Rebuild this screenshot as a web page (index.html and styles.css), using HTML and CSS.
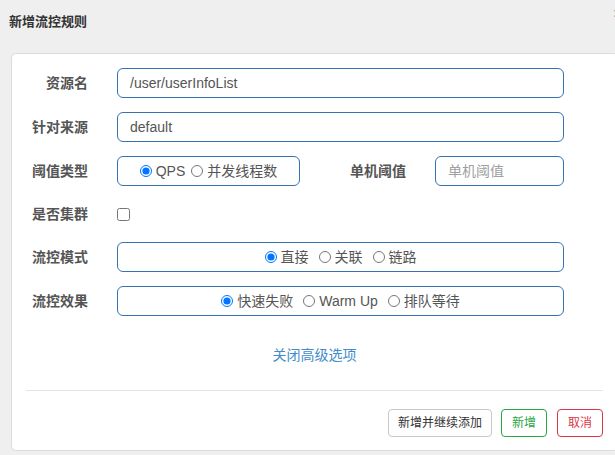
FILE: index.html
```html
<!DOCTYPE html>
<html lang="zh">
<head>
<meta charset="utf-8">
<title>新增流控规则</title>
<link rel="stylesheet" href="styles.css">
</head>
<body>
<div class="dialog">
  <div class="dialog-header">
    <span class="dialog-title">新增流控规则</span>
    <span class="dialog-close">×</span>
  </div>
  <div class="card">
    <div class="form">
      <div class="row">
        <label class="label">资源名</label>
        <div class="field input">/user/userInfoList</div>
      </div>
      <div class="row">
        <label class="label">针对来源</label>
        <div class="field input">default</div>
      </div>
      <div class="row">
        <label class="label">阈值类型</label>
        <div class="box box-small">
          <label class="opt"><input type="radio" name="grade" checked><span>QPS</span></label>
          <label class="opt"><input type="radio" name="grade"><span>并发线程数</span></label>
        </div>
        <label class="label label-second">单机阈值</label>
        <div class="input input-small placeholder">单机阈值</div>
      </div>
      <div class="row row-check">
        <label class="label">是否集群</label>
        <input type="checkbox" class="check">
      </div>
      <div class="row">
        <label class="label">流控模式</label>
        <div class="box field">
          <label class="opt"><input type="radio" name="mode" checked><span>直接</span></label>
          <label class="opt"><input type="radio" name="mode"><span>关联</span></label>
          <label class="opt"><input type="radio" name="mode"><span>链路</span></label>
        </div>
      </div>
      <div class="row">
        <label class="label">流控效果</label>
        <div class="box field">
          <label class="opt"><input type="radio" name="effect" checked><span>快速失败</span></label>
          <label class="opt"><input type="radio" name="effect"><span>Warm Up</span></label>
          <label class="opt"><input type="radio" name="effect"><span>排队等待</span></label>
        </div>
      </div>
    </div>
    <div class="advanced"><a class="link">关闭高级选项</a></div>
    <div class="divider"></div>
    <div class="actions">
      <button class="btn btn-default">新增并继续添加</button>
      <button class="btn btn-success">新增</button>
      <button class="btn btn-danger">取消</button>
    </div>
  </div>
</div>
</body>
</html>
```
FILE: styles.css
```css
html, body {
  margin: 0;
  padding: 0;
  overflow: hidden;
  background: #efefef;
  font-family: "Liberation Sans", "Noto Sans CJK SC", sans-serif;
  color: #555;
}

.dialog {
  padding-left: 11px;
  width: 611px;
}

.dialog-header {
  display: flex;
  align-items: flex-start;
  padding-top: 13px;
  height: 18px;
}

.dialog-title {
  font-size: 13px;
  font-weight: bold;
  line-height: 18px;
  color: #333;
  margin-left: -2px;
}

.dialog-close {
  margin-left: auto;
  font-size: 16px;
  line-height: 1;
  color: #aaa;
  margin-top: -7px;
}

.card {
  box-sizing: border-box;
  width: 607px;
  margin-top: 22px;
  background: #fff;
  border: 1px solid #dcdcdc;
  border-radius: 5px;
  padding: 14px 14px 13px 14px;
}

.form {
  display: flex;
  flex-direction: column;
  gap: 14px;
}

.row {
  display: flex;
  align-items: center;
  height: 30px;
}

.row-check {
  height: 28px;
}

.label {
  width: 62px;
  flex: none;
  text-align: right;
  font-size: 14px;
  font-weight: bold;
  color: #555;
  margin-right: 29px;
  line-height: 20px;
}

.label-second {
  margin-left: 44px;
}

.field {
  width: 447px;
}

.input {
  box-sizing: border-box;
  height: 30px;
  border: 1px solid #3573b3;
  border-radius: 6px;
  padding: 0 12px;
  font-size: 14px;
  line-height: 28px;
  color: #555;
}

.input-small {
  width: 129px;
}

.placeholder {
  color: #a0a0a0;
}

.box {
  box-sizing: border-box;
  height: 30px;
  border: 1px solid #3573b3;
  border-radius: 6px;
  display: flex;
  align-items: center;
  justify-content: center;
  gap: 10px;
  font-size: 14px;
}

.box-small {
  width: 183px;
  gap: 6px;
}

.opt {
  display: flex;
  align-items: center;
  gap: 4px;
  color: #555;
  line-height: 20px;
}

.opt input {
  margin: 0;
  width: 12px;
  height: 12px;
}

.check {
  margin: 0;
  width: 13px;
  height: 13px;
}

.advanced {
  margin-top: 29px;
  text-align: center;
  line-height: 20px;
  font-size: 14px;
}

.link {
  color: #428bca;
  text-decoration: none;
}

.divider {
  margin-top: 25px;
  height: 1px;
  background: #e5e5e5;
}

.actions {
  margin-top: 18px;
  display: flex;
  justify-content: flex-end;
  gap: 9px;
}

.btn {
  box-sizing: border-box;
  height: 28px;
  padding: 0 10px;
  border-radius: 4px;
  background: #fff;
  font-family: "Liberation Sans", "Noto Sans CJK SC", sans-serif;
  font-size: 12px;
  line-height: 26px;
  cursor: pointer;
}

.btn-default {
  border: 1px solid #c8c8c8;
  color: #333;
  padding: 0 9px;
}

.btn-success {
  border: 1px solid #28a745;
  color: #28a745;
}

.btn-danger {
  border: 1px solid #dc3545;
  color: #dc3545;
  margin-left: 1px;
}
```
